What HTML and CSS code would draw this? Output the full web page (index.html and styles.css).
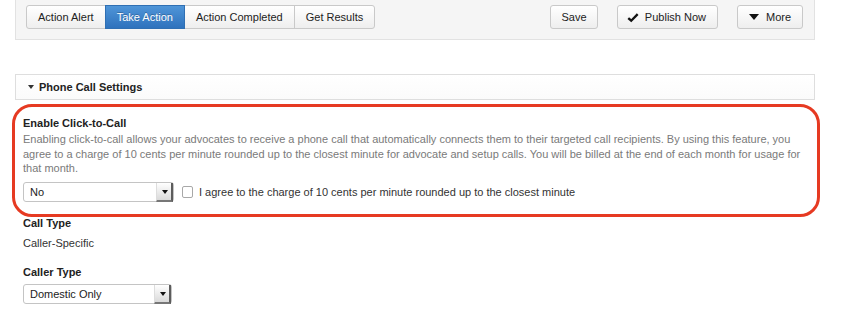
FILE: index.html
```html
<!DOCTYPE html>
<html lang="en">
<head>
    <meta charset="UTF-8">
    <title>Phone Call Settings</title>
    <link rel="stylesheet" href="styles.css">
</head>
<body>
    <div class="page">
        <div class="toolbar">
            <div class="btn-group">
                <button class="btn">Action Alert</button>
                <button class="btn active">Take Action</button>
                <button class="btn">Action Completed</button>
                <button class="btn">Get Results</button>
            </div>
            <div class="tools">
                <button class="btn btn-save">Save</button>
                <button class="btn btn-publish">
                    <svg class="icon-check" width="14" height="11" viewBox="0 0 14 11">
                        <path d="M1.5 6.2 L5 9.3 L12.6 1.6" fill="none" stroke="#111" stroke-width="2.8" stroke-linejoin="miter"/>
                    </svg>
                    Publish Now
                </button>
                <button class="btn btn-more">
                    <span class="caret-down"></span>
                    More
                </button>
            </div>
        </div>

        <div class="panel-header">
            <span class="toggle"></span>
            Phone Call Settings
        </div>

        <div class="panel-body">
            <div class="highlight"></div>

            <div class="field">
                <div class="field-label">Enable Click-to-Call</div>
                <p class="help">Enabling click-to-call allows your advocates to receive a phone call that automatically connects them to their targeted call recipients. By using this feature, you agree to a charge of 10 cents per minute rounded up to the closest minute for advocate and setup calls. You will be billed at the end of each month for usage for that month.</p>
                <div class="row">
                    <div class="select-wrap">
                        <select class="select">
                            <option>No</option>
                            <option>Yes</option>
                        </select>
                    </div>
                    <label class="agree">
                        <input type="checkbox" class="checkbox">
                        I agree to the charge of 10 cents per minute rounded up to the closest minute
                    </label>
                </div>
            </div>

            <div class="field field-call-type">
                <div class="field-label">Call Type</div>
                <div class="value">Caller-Specific</div>
            </div>

            <div class="field field-caller-type">
                <div class="field-label">Caller Type</div>
                <div class="select-wrap">
                    <select class="select">
                        <option>Domestic Only</option>
                        <option>International</option>
                    </select>
                </div>
            </div>
        </div>
    </div>
</body>
</html>
```

FILE: styles.css
```css
* {
    margin: 0;
    padding: 0;
    box-sizing: border-box;
}

body {
    font-family: "Liberation Sans", Arial, Helvetica, sans-serif;
    font-size: 11px;
    color: #222;
    background: #fff;
}

.page {
    padding: 0 26px 0 15px;
}

/* top toolbar */

.toolbar {
    display: flex;
    justify-content: space-between;
    align-items: flex-start;
    background: #f5f5f5;
    border: 1px solid #e2e2e2;
    border-top: none;
    padding: 5px 11px 10px 10px;
}

.btn {
    font-family: inherit;
    font-size: 11px;
    color: #222;
    height: 24px;
    padding: 0 11px;
    border: 1px solid #c9c9c9;
    border-radius: 3px;
    background: linear-gradient(#ffffff, #eeeeee);
    display: inline-flex;
    align-items: center;
    white-space: nowrap;
    cursor: pointer;
}

.btn-group {
    display: flex;
}

.btn-group .btn {
    border-radius: 0;
    margin-left: -1px;
}

.btn-group .btn:first-child {
    margin-left: 0;
    border-radius: 3px 0 0 3px;
}

.btn-group .btn:last-child {
    border-radius: 0 3px 3px 0;
}

.btn-group .btn.active {
    background: linear-gradient(#4f95d8, #2e72bd);
    border-color: #2f6fb3;
    color: #fff;
    text-shadow: 0 -1px 0 rgba(0, 0, 0, 0.25);
    position: relative;
}

.tools {
    display: flex;
    gap: 19px;
}

.btn-save {
    width: 48px;
    justify-content: center;
}

.btn-publish {
    width: 101px;
    padding-left: 9px;
    gap: 6px;
}

.btn-more {
    width: 66px;
    padding-left: 11px;
    gap: 7px;
}

.caret-down {
    width: 0;
    height: 0;
    border-left: 5px solid transparent;
    border-right: 5px solid transparent;
    border-top: 6px solid #111;
}

/* collapsible panel */

.panel-header {
    margin-top: 34px;
    height: 26px;
    border: 1px solid #dedede;
    background: linear-gradient(#ffffff, #fbfbfb);
    display: flex;
    align-items: center;
    gap: 5px;
    padding-left: 12px;
    font-weight: bold;
    color: #222;
}

.toggle {
    width: 0;
    height: 0;
    border-left: 3.5px solid transparent;
    border-right: 3.5px solid transparent;
    border-top: 4px solid #333;
}

.panel-body {
    position: relative;
    padding: 16px 8px 20px;
}

.highlight {
    position: absolute;
    top: 4px;
    left: -3px;
    width: 808px;
    height: 113px;
    border: 3px solid #e63a22;
    border-radius: 20px;
    pointer-events: none;
}

.field-label {
    font-weight: bold;
    line-height: 15px;
    color: #222;
}

.help {
    color: #7a7a7a;
    line-height: 14.5px;
    margin-top: 1px;
}

.row {
    display: flex;
    align-items: center;
    margin-top: 6px;
}

.select-wrap {
    position: relative;
    width: 151px;
    height: 20px;
}

.select {
    appearance: none;
    -webkit-appearance: none;
    width: 100%;
    height: 100%;
    font-family: inherit;
    font-size: 11px;
    color: #222;
    background: #fff;
    border: 1px solid #c4c4c4;
    border-radius: 3px;
    padding: 0 6px;
    outline: none;
}

.select-wrap::after {
    content: "";
    position: absolute;
    top: 1px;
    right: 1px;
    width: 14px;
    height: 17px;
    background: linear-gradient(#ffffff, #d9d9d9);
    border-right: 2px solid #5c5c5c;
    border-bottom: 2px solid #777;
    border-left: 1px solid #ddd;
    pointer-events: none;
}

.select-wrap::before {
    content: "";
    position: absolute;
    top: 8px;
    right: 6px;
    border-left: 3px solid transparent;
    border-right: 3px solid transparent;
    border-top: 4px solid #111;
    z-index: 1;
    pointer-events: none;
}

.agree {
    display: flex;
    align-items: center;
    gap: 6px;
    margin-left: 8px;
    color: #333;
}

.checkbox {
    appearance: none;
    -webkit-appearance: none;
    width: 11px;
    height: 12px;
    border: 1px solid #a8a8a8;
    border-radius: 2px;
    background: #fff;
}

.field-call-type {
    margin-top: 14px;
}

.value {
    margin-top: 5px;
    line-height: 15px;
    color: #333;
}

.field-caller-type {
    margin-top: 14px;
}

.field-caller-type .select-wrap {
    margin-top: 4px;
    width: 149px;
}
```
